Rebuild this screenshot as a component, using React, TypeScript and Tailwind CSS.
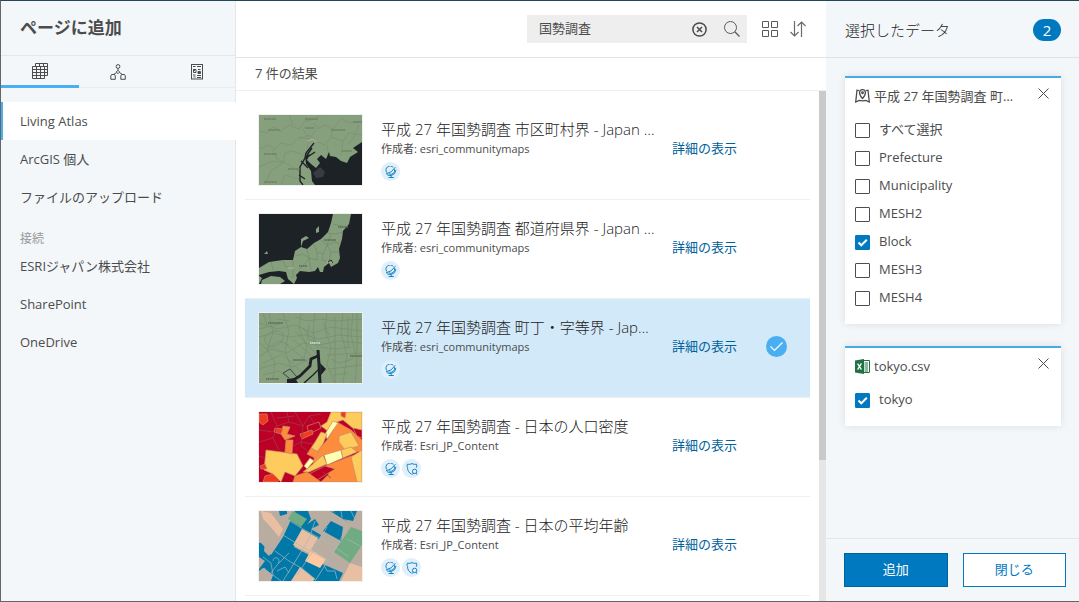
import { useState } from 'react';
import type { ReactNode } from 'react';
import clsx from 'clsx';

const GREEN = '#869f7c';
const WATER = '#1d2227';

function MetroThumb() {
	return (
		<svg viewBox="0 0 103 70" className="block h-full w-full">
			<rect width="103" height="70" fill={GREEN} />
			<g fill="none" stroke="#7a9073" strokeWidth="0.7">
				<path d="M0 16L8 18L14 12L22 16L30 10L40 14L46 6L56 4L62 0M0 34L10 30L16 34L22 28L32 30L40 22L50 24L58 14L66 10L74 14L82 4L90 8L103 6" />
				<path d="M6 70L12 56L24 48L26 38L34 36L44 40M14 34L18 44L30 50L40 56M56 26L66 30L72 22L84 26L90 18L103 20M68 30L70 42M84 26L82 40M30 0L34 10M74 14L72 22M24 48L14 46L0 52M22 70L26 60L40 64" />
				<path d="M40 24L50 20L58 26M54 8L60 14M44 14L50 24L48 34M88 30L94 24L100 10" />
			</g>
			<path
				d="M103 27L97 31L94 33L99 37L91 42L88 48L82 46L77 42L71 41L70 37L67 44L62 40L58 44L61 48L57 53L52 49L48 45L51 39L46 41L47 49L52 56L53 66L56 70L103 70Z"
				fill={WATER}
			/>
			<path
				d="M55 28L47 38L46 43L41 52L41 66L44 70M53 33L48 40M56 37L47 43M42 46L49 53M40 60L46 64"
				fill="none"
				stroke={WATER}
				strokeWidth="1.4"
			/>
			<path d="M54 58L61 52L66 57L64 62L57 63Z" fill="#383c40" />
			<path d="M48 26l6-2 4 3" fill="none" stroke="#b5ab9e" />
			<g stroke="#6c7d67" strokeWidth="1.6" strokeDasharray="1.2 0.4" fill="none">
				<path d="M5 4h12M46 4h13M9 15h12M46 13h9M72 15h14M5 39h13M29 54h12M5 67h13M94 7h9M83 36h10" />
			</g>
		</svg>
	);
}

function JapanThumb() {
	return (
		<svg viewBox="0 0 103 70" className="block h-full w-full">
			<rect width="103" height="70" fill={WATER} />
			<g fill={GREEN}>
				<path d="M74 0L72 9L69 18L62 25L55 29L48 35L42 33L44 27L50 24L47 22L42 25L42 33L36 37L34 46L24 46L10 48L0 54L0 61L10 58L20 57L27 58L29 65L35 70L38 64L37 61L41 57L50 58L56 57L59 53L61 58L64 58L65 53L70 49L72 53L79 49L81 44L80 35L83 25L84 17L90 10L92 0Z" />
				<path d="M3 66L12 62L21 63L26 67L21 70L2 70Z" />
				<path d="M57 15L60 12L60 18L57 19ZM5 40L8 37L9 40ZM0 62L3 64L0 70Z" />
			</g>
			<g fill="none" stroke="#738a6b" strokeWidth="0.7">
				<path d="M69 19L76 20L84 18M62 26L68 31L76 28L82 30M72 20L68 31L72 38L80 38M55 30L58 38L64 40L68 31M48 35L50 44L58 46L58 38M64 40L63 46L70 48L72 38M36 42L44 40L50 44L44 52L40 56M24 46L26 52L34 54L34 46M12 48L14 56M50 44L52 56M74 10L84 12M34 54L34 64" />
			</g>
			<g fill="none" stroke="#596a55" strokeWidth="1.6" strokeDasharray="1.4 0.4">
				<path d="M65 26h12M79 13h10M40 52h8" />
			</g>
			<path d="M68 48h7M29 54h6" stroke="#aab3a6" strokeWidth="1.4" strokeDasharray="1.4 0.4" />
			<path d="M69 48l3-2 2 3M22 62l4-2M67 56v4M68 64v3" fill="none" stroke={WATER} />
		</svg>
	);
}

function BlocksThumb() {
	return (
		<svg viewBox="0 0 103 70" className="block h-full w-full">
			<rect width="103" height="70" fill={GREEN} />
			<g fill="none" stroke="#748b6e" strokeWidth="0.6">
				<path d="M0 10L18 16L36 12L54 20L72 14L103 18M0 44L12 36L28 40L44 30L60 32L80 28L103 30M0 56L20 50L34 54L50 46M68 0L66 16L72 34L68 52L76 70M84 0L82 20L88 42L84 70" />
				<path d="M10 0L14 20L8 36L16 50L14 66M24 0L30 18L26 38L34 60M42 0L40 16L48 34L44 48M56 0L54 20L59 36M94 0L92 22L98 46L96 70M68 42L103 40M70 56L103 52M0 24L14 20L30 24L46 22L60 26L80 22L103 24" />
				<path d="M0 30L8 36L20 28L30 32M36 4L48 8L62 6L76 8L103 6M4 0L8 12M18 6L30 8M62 34L76 36L92 34M72 46L80 50L94 46M74 62L90 60M4 62L20 58L30 66M50 12L48 26L56 28M64 10L70 22M76 4V70M89 4V34M6 24Q14 14 24 20Q26 30 14 34Q4 32 6 24" />
				<path d="M36 18L58 42M42 14L62 34M34 26L54 44M28 32L50 50M22 40L44 60M0 16L24 10M4 50L22 42M98 0V44" />
			</g>
			<g fill="none" stroke={WATER}>
				<path d="M59 37L60 52L61 70" strokeWidth="3" />
				<path d="M59 43L52 46L51 53L41 63L31 69" strokeWidth="2.8" />
				<path d="M61 55L54 62L45 70" strokeWidth="1.4" />
				<path d="M30 65L24 60L31 56L38 64" strokeWidth="0.7" />
			</g>
			<path d="M61 50L67 56L62 62ZM28 66L36 65L39 70H28Z" fill={WATER} />
			<g fill="none" stroke="#66785f" strokeWidth="1.8" strokeDasharray="1.4 0.4">
				<path d="M9 10h15M34 47h12M91 43h12M7 66h13" />
			</g>
			<path d="M51 30h10" stroke="#c2c9bd" strokeWidth="1.8" strokeDasharray="1.4 0.4" />
		</svg>
	);
}

function DensityThumb() {
	return (
		<svg viewBox="0 0 103 70" className="block h-full w-full">
			<rect width="103" height="70" fill="#bd0026" />
			<g stroke="#c98a6a" strokeWidth="0.7">
				<path d="M72 0L103 0L103 24L96 18L84 8L78 10L70 20L62 14L68 10Z" fill="#fecc5c" />
				<path d="M7 38L38 42L44 54L36 64L26 60L22 70L14 62L5 58Z" fill="#fecc5c" />
				<path d="M78 10L92 18L103 28L103 40L86 38L64 44L54 52L56 42L68 28Z" fill="#fd8d3c" />
				<path d="M80 24L92 20L100 34L86 38L80 30Z" fill="#fecc5c" />
				<path d="M54 52L64 43L68 52L50 60L44 60Z" fill="#fecc5c" />
				<path d="M65 43L82 38L84 46L68 53Z" fill="#ffffb2" />
				<path d="M66 22L74 9L79 11L68 27Z" fill="#ffffb2" />
				<path d="M45 54L51 46L55 49L48 57Z" fill="#ffffb2" />
				<path d="M82 38L92 35L98 40L84 46Z" fill="#fecc5c" />
				<path d="M66 54L92 44L103 42L103 70L62 70L70 62Z" fill="#fd8d3c" />
				<path d="M92 45L103 38L103 70L98 70Z" fill="#fecc5c" />
				<path d="M50 62L66 54L76 57L58 68Z" fill="#bd0026" />
				<path d="M36 64L48 60L62 70L34 70Z" fill="#fd8d3c" />
				<path d="M56 30L62 20L68 22L64 32L58 40L52 36Z" fill="#fecc5c" />
				<path d="M24 14L31 15L28 22L36 24L26 28L22 22Z" fill="#fd8d3c" />
				<path d="M27 28L34 28L33 42L26 40Z" fill="#fd8d3c" />
				<path d="M48 14L60 10L62 16L50 22Z" fill="#bd0026" />
				<path d="M52 36L60 40L56 46L48 42Z" fill="#fd8d3c" />
				<path d="M0 2L8 2L9 9L4 13L0 10Z" fill="#f03b20" />
				<path d="M41 22L53 18L54 22L43 27ZM16 16L24 17L22 22L15 20ZM6 64L14 62L20 68L18 70L4 70ZM1 54L6 52L8 57L2 57ZM82 0L87 0L86 6L82 4Z" fill="#f03b20" />
				<path d="M94 16L103 18L103 26L98 24Z" fill="#bd0026" />
			</g>
			<g fill="none" stroke="#a3364a" strokeWidth="0.8">
				<path d="M12 0L18 14L14 26L0 30M18 14L30 10L44 14L50 4L62 2M30 10L28 0M36 0L44 14L42 34L50 40M14 26L20 38M0 18L14 20M34 34L42 30L54 32M50 4L56 12M0 44L6 46M18 6L36 4M64 60L72 66" />
			</g>
		</svg>
	);
}

function AgeThumb() {
	return (
		<svg viewBox="0 0 103 70" className="block h-full w-full">
			<rect width="103" height="70" fill="#b9aca1" />
			<path d="M30 0L49 0L52 8L42 22L35 36L50 44L66 54L84 62L80 70L0 70L0 58L6 50L0 46L0 32L6 30L5 40L10 45L20 30Z" fill="#0079a8" />
			<path d="M0 0H36L24 26L12 44L6 36L0 30Z" fill="#b9aca1" />
			<path d="M2 0L12 2L24 18L20 26L10 14L4 8Z" fill="#e8bfa2" />
			<path d="M20 0H28V3L21 5ZM44 16L56 8L60 14L52 18L62 24L60 28L44 20ZM72 10L84 16L82 30L64 20ZM74 0L98 0L94 10L84 8Z" fill="#0079a8" />
			<path d="M34 0L48 8L42 16L29 8Z" fill="#70ab82" />
			<path d="M92 16L103 20L103 34L91 52L75 41Z" fill="#70ab82" />
			<path d="M43 18L59 27L50 42L34 34Z" fill="#e8bfa2" />
			<path d="M52 39L67 48L61 57L46 50Z" fill="#ffc8a0" />
			<path d="M91 52L103 56L103 70L82 70Z" fill="#e8bfa2" />
			<path d="M41 56L56 68L54 70L32 70Z" fill="#e8bfa2" />
			<path d="M0 60L5 57L14 64L12 70H0Z" fill="#b9aca1" />
			<g fill="none" stroke="#a9b9bb" strokeWidth="0.7">
				<path d="M28 8L44 18L70 32L90 46M24 24L40 34L66 48L84 60M16 40L30 50L44 58L56 68M56 10L50 28L34 54L24 70M68 16L54 40L38 64M88 16L74 42L56 70M6 70L18 54L30 42M64 52L68 60L76 60L78 68" />
				<path d="M4 46L12 52L14 64L22 70M82 0L84 12M92 0L96 8M88 28L103 36M14 50a3 3 0 1 1 5 2M2 62a3 3 0 1 1 4 1M18 60L26 56L30 62" />
			</g>
			<path d="M71 0L78 2L82 6L90 12L84 8Z" fill="#0079a8" />
		</svg>
	);
}

type Layer = {
	title: string;
	owner: string;
	thumb: ReactNode;
	authoritative?: boolean;
	selected?: boolean;
};

const layers: Layer[] = [
	{
		title: '平成 27 年国勢調査 市区町村界 - Japan …',
		owner: 'esri_communitymaps',
		thumb: <MetroThumb />,
	},
	{
		title: '平成 27 年国勢調査 都道府県界 - Japan …',
		owner: 'esri_communitymaps',
		thumb: <JapanThumb />,
	},
	{
		title: '平成 27 年国勢調査 町丁・字等界 - Jap…',
		owner: 'esri_communitymaps',
		thumb: <BlocksThumb />,
		selected: true,
	},
	{
		title: '平成 27 年国勢調査 - 日本の人口密度',
		owner: 'Esri_JP_Content',
		thumb: <DensityThumb />,
		authoritative: true,
	},
	{
		title: '平成 27 年国勢調査 - 日本の平均年齢',
		owner: 'Esri_JP_Content',
		thumb: <AgeThumb />,
		authoritative: true,
	},
];

const sources = ['Living Atlas', 'ArcGIS 個人', 'ファイルのアップロード'];
const connections = ['ESRIジャパン株式会社', 'SharePoint', 'OneDrive'];

function TableIcon() {
	return (
		<svg width="16" height="16" viewBox="0 0 16 16" fill="none" stroke="#4c4c4c">
			<path d="M3.5 0.5H15.5V12.5H12.5M3.5 0.5V3M0.5 3.5H15.5M0.5 3.5V15.5H12.5V3.5M0.5 6.5H15.5M0.5 9.5H15.5M0.5 12.5H12.5M4.5 3.5V15.5M8.5 3.5V15.5M7.5 0.5V3.5M11.5 0.5V3.5" />
		</svg>
	);
}

function HierarchyIcon() {
	return (
		<svg width="16" height="16" viewBox="0 0 16 16" fill="none" stroke="#4c4c4c">
			<circle cx="8" cy="2.5" r="1.9" />
			<path d="M8 4.5V6.5M8 6.3L9.7 8L8 9.7L6.3 8ZM6.6 8.5L3.5 10.5M9.4 8.5L12.5 10.5M1.5 10.5H4.5L5.3 12V15.3H0.8V12ZM11.5 10.5H14.5L15.3 12V15.3H10.8V12Z" />
		</svg>
	);
}

function ReportIcon() {
	return (
		<svg width="12" height="16" viewBox="0 0 12 16" fill="none" stroke="#4c4c4c">
			<rect x="0.5" y="0.5" width="11" height="14.5" />
			<path d="M2 2.5H4.5M6 2.5H10M2.5 5.5H5V8.5H2.5ZM7 5.5H9.5M7 7.5H9.5V9.5H7ZM2 11H4.5M6 11.5H10M2.5 13H4.5M6 13.5H10" />
			<path d="M2 5h2v2h-2ZM7 8h2v2h-2Z" fill="#4c4c4c" stroke="none" />
		</svg>
	);
}

function ClearIcon() {
	return (
		<svg width="15" height="15" viewBox="0 0 15 15" fill="none" stroke="#4c4c4c" strokeWidth="1.5">
			<circle cx="7.5" cy="7.5" r="6.6" />
			<path d="M5 5L10 10M10 5L5 10" />
		</svg>
	);
}

function SearchIcon() {
	return (
		<svg width="16" height="16" viewBox="0 0 16 16" fill="none" stroke="#5a5a5a">
			<circle cx="6.5" cy="6.5" r="6" />
			<path d="M10.8 10.8L15.5 15.5" strokeWidth="1.3" />
		</svg>
	);
}

function GridIcon() {
	return (
		<svg width="16" height="16" viewBox="0 0 16 16" fill="none" stroke="#5a5a5a">
			<path d="M0.5 0.5H6.5V6.5H0.5ZM9.5 0.5H15.5V6.5H9.5ZM0.5 9.5H6.5V15.5H0.5ZM9.5 9.5H15.5V15.5H9.5Z" />
		</svg>
	);
}

function SortIcon() {
	return (
		<svg width="16" height="16" viewBox="0 0 16 16" fill="none" stroke="#6a6a6a" strokeWidth="1.2">
			<path d="M4.5 0V14.5M0.5 11L4.5 15L8.5 11M11.5 16V1.5M7.5 5L11.5 1L15.5 5" />
		</svg>
	);
}

function GlobeBadge() {
	return (
		<span className="flex size-[19px] items-center justify-center rounded-full bg-[#e0effa]">
			<svg width="12" height="12" viewBox="0 0 12 12" fill="none" stroke="#0079c1" strokeWidth="0.9">
				<path d="M1.8 6.6A4 4 0 0 1 8.4 1.6M9.5 3.2A4 4 0 0 1 3.6 7.8" />
				<path d="M1 7.8Q6.6 7.2 10.4 1.2M10.9 3.8Q10.6 8.4 6.6 9.4Q3.6 9.8 1.8 8.6M6.2 9.6V11.5M3.6 11.5H8.8" />
			</svg>
		</span>
	);
}

function ShieldBadge() {
	return (
		<span className="flex size-[19px] items-center justify-center rounded-full bg-[#e0effa]">
			<svg width="12" height="12" viewBox="0 0 12 12" fill="none" stroke="#0079c1" strokeWidth="0.9">
				<path d="M5.6 11.2Q1.4 9 1.6 4.6Q0.4 3.4 1.4 1.2Q3.8 1.8 6 0.6Q8.2 1.8 10.4 1.2Q11.4 3.4 10.2 4.8" />
				<circle cx="8.6" cy="8.4" r="2.2" />
				<path d="M7 10.2L6.6 11.6M10.2 10.2L10.8 11.6" />
			</svg>
		</span>
	);
}

function MapPinIcon() {
	return (
		<svg width="15" height="14" viewBox="0 0 15 14" fill="none" stroke="#4c4c4c" strokeWidth="1.3">
			<path d="M4 1.6L2 1.2L0.7 13L4.2 11.4L7.5 11.8L10.8 11.4L14.3 13L13 1.2L11 1.6" />
			<path d="M7.5 9.6Q4.4 6 4.6 3.6A2.9 2.9 0 0 1 10.4 3.6Q10.6 6 7.5 9.6Z" />
			<circle cx="7.5" cy="3.8" r="0.8" />
		</svg>
	);
}

function ExcelIcon() {
	return (
		<svg width="15" height="15" viewBox="0 0 15 15">
			<path d="M8 1.5H14.5V13.5H8Z" fill="#fff" stroke="#207245" />
			<path d="M9.5 4H13M9.5 6H13M9.5 8H13M9.5 10H13M9.5 12H13" stroke="#207245" />
			<path d="M0 1.6L9 0V15L0 13.4Z" fill="#207245" />
			<path d="M2.6 4.6L6.4 10.6M6.4 4.4L2.6 10.6" stroke="#fff" strokeWidth="1.3" />
		</svg>
	);
}

function CloseIcon() {
	return (
		<svg width="11" height="11" viewBox="0 0 11 11" fill="none" stroke="#4c4c4c">
			<path d="M0.5 0.5L10.5 10.5M10.5 0.5L0.5 10.5" />
		</svg>
	);
}

function LayerRow({ layer }: { layer: Layer }) {
	return (
		<li
			className={clsx(
				'flex items-start border-b border-[#efefef] py-[13px] pr-[23px] pl-[13px]',
				layer.selected && 'bg-[#d2e9f9]',
			)}
		>
			<div className="h-[72px] w-[105px] shrink-0 border border-[#f0f0f0]">{layer.thumb}</div>
			<div className="ml-[18px] min-w-0 flex-1 pt-[5px]">
				<h3 className="truncate text-[15px] leading-5 font-light text-[#222]">{layer.title}</h3>
				<p className="truncate text-[11px] leading-5">作成者: {layer.owner}</p>
				<div className="mt-[3px] flex gap-[2px]">
					<GlobeBadge />
					{layer.authoritative && <ShieldBadge />}
				</div>
			</div>
			<a href="#details" className="mb-1 ml-[10px] w-[66px] self-center text-[13px] leading-5 whitespace-nowrap text-[#00619b]">
				詳細の表示
			</a>
			<span className="mb-1 ml-7 flex size-[21px] items-center self-center">
				{layer.selected && (
					<svg width="21" height="21" viewBox="0 0 21 21" fill="none">
						<circle cx="10.5" cy="10.5" r="10.5" fill="#4aaff2" />
						<path d="M4.5 10.5L8.5 14.5L16.5 6.5" stroke="#fff" strokeWidth="1.2" />
					</svg>
				)}
			</span>
		</li>
	);
}

function CheckRow({ label, defaultChecked }: { label: string; defaultChecked?: boolean }) {
	return (
		<label className="flex h-7 items-center gap-[9px]">
			<span className="relative flex size-[15px]">
				<input
					type="checkbox"
					defaultChecked={defaultChecked}
					className="peer size-[15px] appearance-none rounded-[1px] border border-[#4c4c4c] bg-white checked:border-[#0079c1] checked:bg-[#0079c1]"
				/>
				<svg
					viewBox="0 0 15 15"
					fill="none"
					className="pointer-events-none absolute inset-0 hidden size-[15px] peer-checked:block"
				>
					<path d="M3.5 7.5L6.3 10.3L11.8 4.8" stroke="#fff" strokeWidth="2" />
				</svg>
			</span>
			{label}
		</label>
	);
}

function DataCard({ icon, title, children }: { icon: ReactNode; title: string; children: ReactNode }) {
	return (
		<section className="border-t-2 border-[#47aae8] bg-white px-[10px] pt-2 pb-3 shadow-[0_0_8px_rgba(0,0,0,0.1)]">
			<div className="mb-[10px] flex items-start">
				<h3 className="flex min-w-0 flex-1 items-center gap-1 leading-5">
					<span className="shrink-0">{icon}</span>
					<span className="truncate">{title}</span>
				</h3>
				<button type="button" aria-label="削除" className="flex size-[15px] items-center justify-center">
					<CloseIcon />
				</button>
			</div>
			{children}
		</section>
	);
}

export default function App() {
	const [query, setQuery] = useState('国勢調査');
	const [source, setSource] = useState('Living Atlas');

	const navItem = (name: string) => (
		<button
			key={name}
			type="button"
			onClick={() => setSource(name)}
			className={clsx(
				'flex h-[38px] w-full items-center border-l-2 pt-[2px] pl-[17px] text-left',
				source === name ? 'border-[#4aaff2] bg-white' : 'border-transparent',
			)}
		>
			{name}
		</button>
	);

	return (
		<div className="flex h-screen overflow-hidden border-t border-b border-l border-t-[#23465c] border-b-[#666] border-l-[#666] bg-white font-['Open_Sans','Noto_Sans_CJK_JP',sans-serif] text-[13px] text-[#4c4c4c]">
			{/* Sources */}
			<aside className="flex w-[235px] shrink-0 flex-col bg-[#f3f7fa] shadow-[inset_-1px_0_0_#e4e7e9]">
				<h1 className="flex h-[55px] items-center border-b border-[#e4e7e9] pl-[19px] text-[17px] font-bold">
					ページに追加
				</h1>
				<div role="tablist" className="flex h-8 border-b border-[#e9edf0]">
					<button type="button" role="tab" aria-label="データ" aria-selected="true" className="-mb-px flex flex-1 items-center justify-center border-b-3 border-[#4aaff2]">
						<TableIcon />
					</button>
					<button type="button" role="tab" aria-label="階層" className="flex flex-1 items-center justify-center">
						<HierarchyIcon />
					</button>
					<button type="button" role="tab" aria-label="レポート" className="flex flex-1 items-center justify-center">
						<ReportIcon />
					</button>
				</div>
				<nav className="pt-[14px]">
					{sources.map(navItem)}
					<h2 className="h-[31px] pt-[14px] pl-[19px] text-xs leading-[17px] text-[#999]">接続</h2>
					{connections.map(navItem)}
				</nav>
			</aside>

			{/* Results */}
			<main className="flex min-w-0 flex-1 flex-col">
				<div className="flex h-[57px] shrink-0 items-center justify-end border-b border-[#e4e4e4] pr-5">
					<div className="flex h-7 w-[220px] items-center bg-[#eee] pr-[7px] pl-3">
						<input
							type="text"
							aria-label="検索"
							value={query}
							onChange={(e) => setQuery(e.target.value)}
							className="min-w-0 flex-1 bg-transparent outline-none"
						/>
						<button type="button" aria-label="クリア" onClick={() => setQuery('')}>
							<ClearIcon />
						</button>
						<button type="button" aria-label="検索実行" className="ml-[17px]">
							<SearchIcon />
						</button>
					</div>
					<button type="button" aria-label="グリッド表示" className="ml-[15px]">
						<GridIcon />
					</button>
					<button type="button" aria-label="並べ替え" className="ml-3">
						<SortIcon />
					</button>
				</div>
				<p className="flex h-[33px] shrink-0 items-center border-b border-[#efefef] pl-[19px]">7 件の結果</p>
				<div className="flex min-h-0 flex-1">
					<ul className="min-w-0 flex-1 overflow-hidden px-[9px] pt-[10px]">
						{layers.map((layer) => (
							<LayerRow key={layer.title} layer={layer} />
						))}
					</ul>
					<div className="w-[7px] bg-[#e6e6e6]">
						<div className="h-[369px] bg-[#cacaca]" />
					</div>
				</div>
			</main>

			{/* Selected data */}
			<aside className="flex w-[253px] shrink-0 flex-col bg-[#f3f7fa]">
				<div className="flex h-[57px] shrink-0 items-center justify-between border-b border-[#dfe3e6] pt-[2px] pr-[18px] pl-[19px]">
					<h2 className="text-[15px] font-light text-[#222]">選択したデータ</h2>
					<span className="flex h-[22px] w-7 items-center justify-center rounded-full bg-[#0079c1] text-[15px] leading-5 text-white">
						2
					</span>
				</div>
				<div className="flex min-h-0 flex-1 flex-col gap-[22px] overflow-hidden pt-[18px] pr-[18px] pl-[19px]">
					<DataCard icon={<MapPinIcon />} title="平成 27 年国勢調査 町…">
						<CheckRow label="すべて選択" />
						<CheckRow label="Prefecture" />
						<CheckRow label="Municipality" />
						<CheckRow label="MESH2" />
						<CheckRow label="Block" defaultChecked />
						<CheckRow label="MESH3" />
						<CheckRow label="MESH4" />
					</DataCard>
					<DataCard icon={<ExcelIcon />} title="tokyo.csv">
						<CheckRow label="tokyo" defaultChecked />
					</DataCard>
				</div>
				<div className="flex shrink-0 gap-[15px] border-t border-[#e4e7e9] pt-[14px] pr-[13px] pb-[14px] pl-[18px]">
					<button type="button" className="h-[34px] flex-1 border border-[#00619b] bg-[#0079c1] text-white">
						追加
					</button>
					<button type="button" className="h-[34px] flex-1 border border-[#0079c1] bg-white text-[#0079c1]">
						閉じる
					</button>
				</div>
			</aside>
		</div>
	);
}
